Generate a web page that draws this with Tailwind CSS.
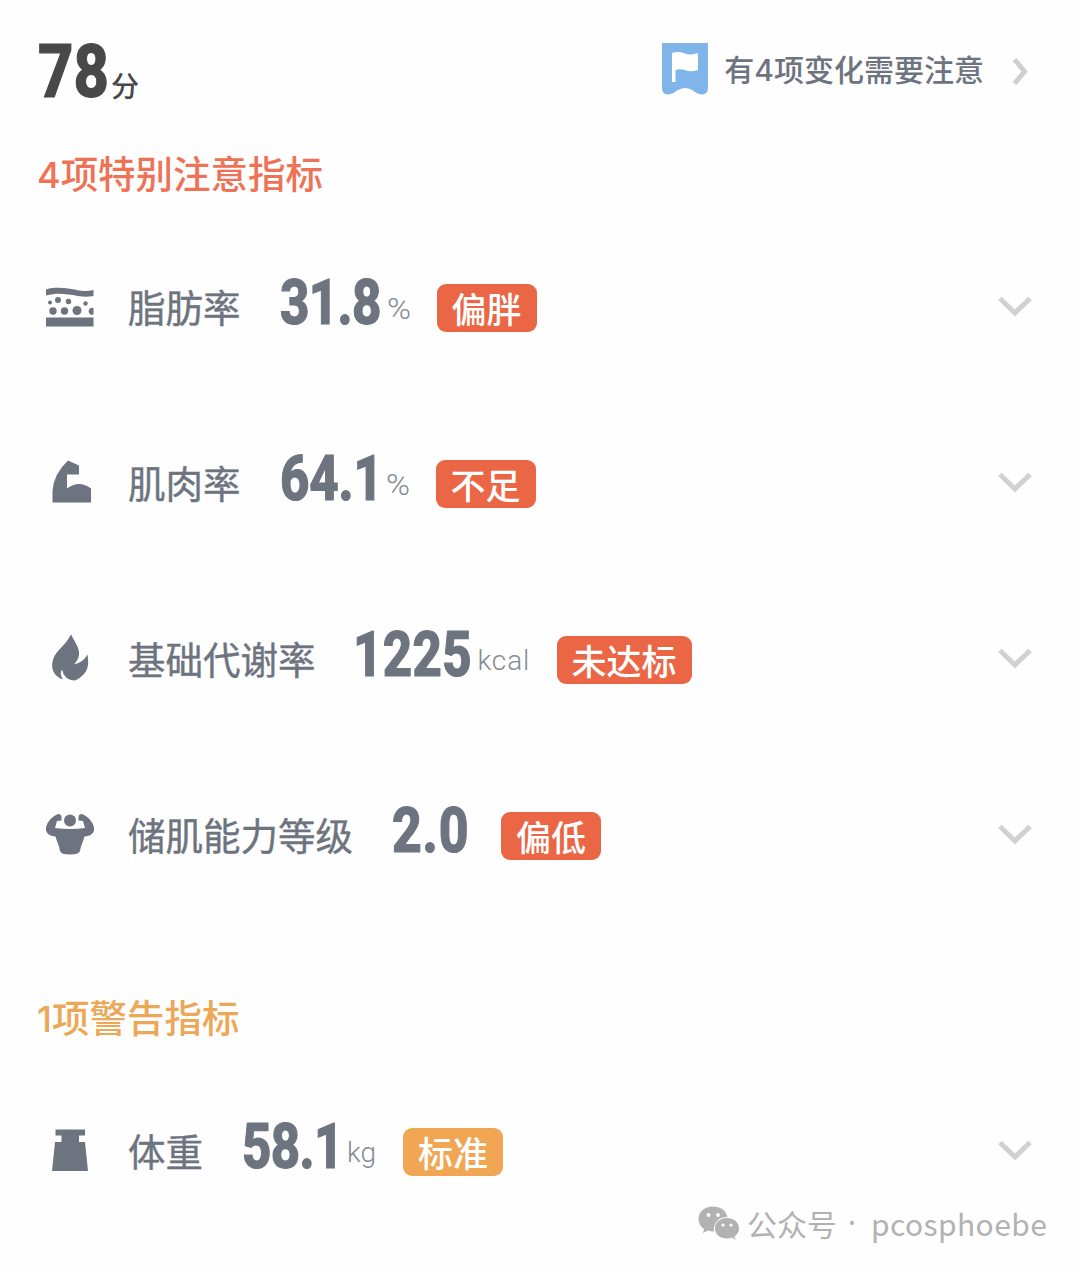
<!DOCTYPE html>
<html lang="zh-CN">
<head>
    <meta charset="UTF-8">
    <meta name="viewport" content="width=device-width, initial-scale=1.0">
    <title>身体指标</title>
    <script src="https://cdn.jsdelivr.net/npm/@tailwindcss/browser@4"></script>
</head>
<body class="bg-[#fefefe] h-[1268px] overflow-hidden text-[#6d747f] font-['Noto_Sans_CJK_SC',sans-serif]">
    <header class="flex items-start h-[139px] pl-[38px] pr-[51px] pt-[34px] border-t border-[#fafafa]">
        <div class="w-[73px] h-[74px] font-['Roboto',sans-serif] font-extrabold text-[74px] leading-[74px] text-[#484848] [-webkit-text-stroke:1.2px]"><span class="inline-block origin-left scale-x-[.83]">78</span></div>
        <span class="pt-[35px] text-[28px] leading-[30px] font-medium text-[#484848]">分</span>
        <a href="#" class="ml-auto flex items-start">
            <svg class="mt-[7px] w-[48px] h-[54px]" viewBox="0 0 48 54">
                <path fill="#7fb5e8" d="M1 1H47V46Q47 52 41 52.500Q37 52.500 31 48Q24 44 17 48Q11 52.500 7 52.500Q1 52 1 46Z"/>
                <path fill="#fff" d="M11 11Q17 9 24 11.500Q30 13.500 37 11V28Q30 30.500 24 28Q19 26.500 14.500 28V40H11Z"/>
            </svg>
            <span class="ml-[15px] pt-[15px] text-[30px] leading-[36px] font-medium whitespace-nowrap">有<span class="font-['Inter',sans-serif]">4</span>项变化需要注意</span>
            <svg class="ml-[28px] mt-[22px] w-[17px] h-[29px]" viewBox="0 0 17 29" fill="none" stroke="#cfcfcf" stroke-width="5"><path d="M2.500 2.500L12.500 14.500L2.500 26.500"/></svg>
        </a>
    </header>

    <h2 class="h-[80px] pl-[37px] pt-[12px] text-[37.5px] leading-[42px] font-medium text-[#ee7356]"><span class="font-['Inter',sans-serif] text-[36px]">4</span>项特别注意指标</h2>
    <ul>
        <!-- 脂肪率 -->
        <li class="flex items-center h-[176px] pl-[46px] pr-[48px]">
            <svg class="w-[48px] h-[48px]" viewBox="0 0 48 48" fill="currentColor">
                <path d="M0 6.500C12 3 25 6 33 7.500Q40 8.500 47.500 7V13Q40 14.500 32 13C20 11 12 9.500 0 12.500Z"/>
                <path d="M0 34.500H47.500V43.500H0Z"/>
                <circle cx="4" cy="19.500" r="2"/><circle cx="12" cy="17" r="3"/><circle cx="22.500" cy="18.500" r="2.700"/><circle cx="39.500" cy="20.500" r="2.200"/>
                <circle cx="7" cy="28" r="3.700"/><circle cx="18.500" cy="28" r="3.700"/><circle cx="31" cy="27.500" r="4.500"/><path d="M47.500 25V31.500A3.500 3.500 0 1 1 47.500 25Z"/>
            </svg>
            <span class="ml-[34px] mb-[3px] text-[37.5px] leading-[44px] whitespace-nowrap [-webkit-text-stroke:0.4px]">脂肪率</span>
            <div class="ml-[39px] w-[107px] h-[64px] mb-[9px] font-['Roboto',sans-serif] font-extrabold text-[63px] leading-[64px] tracking-[-0.8px] [-webkit-text-stroke:1.2px]"><span class="inline-block origin-left scale-x-[.81]">31.8</span></div>
            <span class="w-[50px] mt-[3px] font-['Roboto',sans-serif] font-light text-[29px] leading-[32px] text-[#858b94]"><span class="inline-block origin-left scale-x-[1.12]">%</span></span>
            <span class="mt-[2px] h-[48px] px-[15px] rounded-[9px] bg-[#ea6645] text-white text-[35px] leading-[48px] font-medium whitespace-nowrap">偏胖</span>
            <svg class="ml-auto w-[34px] h-[22px]" viewBox="0 0 34 22" fill="none" stroke="#d1d1d1" stroke-width="5"><path d="M2 2.500L17 17L32 2.500"/></svg>
        </li>
        <!-- 肌肉率 -->
        <li class="flex items-center h-[176px] pl-[46px] pr-[48px]">
            <svg class="w-[48px] h-[48px]" viewBox="0 0 48 48" fill="currentColor">
                <path d="M22 1.500L33 6.500V15.500H21V29.500Q33 20.500 45 29.500V43.500H6.500V32Q7.500 15 22 1.500Z"/>
            </svg>
            <span class="ml-[34px] mb-[3px] text-[37.5px] leading-[44px] whitespace-nowrap [-webkit-text-stroke:0.4px]">肌肉率</span>
            <div class="ml-[39px] w-[106px] h-[64px] mb-[9px] font-['Roboto',sans-serif] font-extrabold text-[63px] leading-[64px] tracking-[-0.2px] [-webkit-text-stroke:1.2px]"><span class="inline-block origin-left scale-x-[.81]">64.1</span></div>
            <span class="w-[50px] mt-[3px] font-['Roboto',sans-serif] font-light text-[29px] leading-[32px] text-[#858b94]"><span class="inline-block origin-left scale-x-[1.12]">%</span></span>
            <span class="mt-[2px] h-[48px] px-[15px] rounded-[9px] bg-[#ea6645] text-white text-[35px] leading-[48px] font-medium whitespace-nowrap">不足</span>
            <svg class="ml-auto w-[34px] h-[22px]" viewBox="0 0 34 22" fill="none" stroke="#d1d1d1" stroke-width="5"><path d="M2 2.500L17 17L32 2.500"/></svg>
        </li>
        <!-- 基础代谢率 -->
        <li class="flex items-center h-[176px] pl-[46px] pr-[48px]">
            <svg class="w-[48px] h-[48px]" viewBox="0 0 48 48" fill="currentColor">
                <path d="M25 -1C27 5 34 12 33 20Q32 26 27.500 29.500Q37 28 41.500 19.500C43 30 42 34 38 39Q33 44 29 45.500Q18 45 16 34.500Q13 39 17 44.500C8 41 5 34 6.500 27C8 16 20 11 25 -1Z"/>
            </svg>
            <span class="ml-[34px] mb-[3px] text-[37.5px] leading-[44px] whitespace-nowrap [-webkit-text-stroke:0.4px]">基础代谢率</span>
            <div class="ml-[37px] w-[125px] h-[64px] mb-[9px] font-['Roboto',sans-serif] font-extrabold text-[63px] leading-[64px] tracking-[0.4px] [-webkit-text-stroke:1.2px]"><span class="inline-block origin-left scale-x-[.81]">1225</span></div>
            <span class="w-[79px] mt-[3px] font-['Roboto',sans-serif] font-light text-[28px] leading-[32px] tracking-[0.9px] text-[#858b94]">kcal</span>
            <span class="mt-[2px] h-[48px] px-[15px] rounded-[9px] bg-[#ea6645] text-white text-[35px] leading-[48px] font-medium whitespace-nowrap">未达标</span>
            <svg class="ml-auto w-[34px] h-[22px]" viewBox="0 0 34 22" fill="none" stroke="#d1d1d1" stroke-width="5"><path d="M2 2.500L17 17L32 2.500"/></svg>
        </li>
        <!-- 储肌能力等级 -->
        <li class="flex items-center h-[176px] pl-[46px] pr-[48px]">
            <svg class="w-[48px] h-[48px]" viewBox="0 0 48 48" fill="currentColor">
                <circle cx="24" cy="9.500" r="6"/>
                <path d="M12 3Q15.500 3 15.500 6V9.500L11 10L9 17Q24 19 39 17L37 10L32.500 9.500V6Q32.500 3 36 3Q46 7 48.500 18Q47 25 38.500 25.500C37 31 34.500 35 34 40Q33 43.500 24 43.500Q15 43.500 14 40C13.500 35 11 31 9.500 25.500Q1 25 -.500 18Q2 7 12 3Z"/>
            </svg>
            <span class="ml-[34px] mb-[3px] text-[37.5px] leading-[44px] whitespace-nowrap [-webkit-text-stroke:0.4px]">储肌能力等级</span>
            <div class="ml-[39px] w-[109px] h-[64px] mb-[9px] font-['Roboto',sans-serif] font-extrabold text-[63px] leading-[64px] tracking-[1px] [-webkit-text-stroke:1.2px]"><span class="inline-block origin-left scale-x-[.82]">2.0</span></div>
            <span class="mt-[2px] h-[48px] px-[15px] rounded-[9px] bg-[#ea6645] text-white text-[35px] leading-[48px] font-medium whitespace-nowrap">偏低</span>
            <svg class="ml-auto w-[34px] h-[22px]" viewBox="0 0 34 22" fill="none" stroke="#d1d1d1" stroke-width="5"><path d="M2 2.500L17 17L32 2.500"/></svg>
        </li>
    </ul>

    <h2 class="h-[140px] pl-[37px] pt-[72px] text-[37.5px] leading-[42px] font-medium text-[#eda857]"><span class="font-['Inter',sans-serif] text-[36px]">1</span>项警告指标</h2>
    <ul>
        <!-- 体重 -->
        <li class="flex items-center h-[176px] pl-[46px] pr-[48px]">
            <svg class="w-[48px] h-[48px]" viewBox="0 0 48 48" fill="currentColor">
                <path d="M9.500 2.500H39V8.500H33V15H39L42 44H6L9 15H15.500V8.500H9.500Z"/>
            </svg>
            <span class="ml-[34px] mb-[3px] text-[37.5px] leading-[44px] whitespace-nowrap [-webkit-text-stroke:0.4px]">体重</span>
            <div class="ml-[39px] w-[105px] h-[64px] mb-[9px] font-['Roboto',sans-serif] font-extrabold text-[63px] leading-[64px] tracking-[-0.8px] [-webkit-text-stroke:1.2px]"><span class="inline-block origin-left scale-x-[.81]">58.1</span></div>
            <span class="w-[56px] mt-[4px] font-['Roboto',sans-serif] font-light text-[28px] leading-[32px] text-[#858b94]">kg</span>
            <span class="mt-[2px] h-[48px] px-[15px] rounded-[9px] bg-[#f0a652] text-white text-[35px] leading-[48px] font-medium whitespace-nowrap">标准</span>
            <svg class="ml-auto w-[34px] h-[22px]" viewBox="0 0 34 22" fill="none" stroke="#d1d1d1" stroke-width="5"><path d="M2 2.500L17 17L32 2.500"/></svg>
        </li>
    </ul>

    <!-- watermark over the last row -->
    <div class="absolute left-[698px] top-[1203px] flex items-center h-[40px] text-[#b2b2b2] whitespace-nowrap">
        <svg class="w-[42px] h-[36px]" viewBox="0 0 42 36" fill="currentColor">
            <path d="M15 1.500C6.500 1.500 .500 7 .500 14Q.500 20 6 24L5 28L10 25.500Q12.500 26.500 16 26.500A12.500 12.500 0 0 1 29.500 12Q27 1.500 15 1.500Z"/>
            <path d="M29 13C22 13 17 17.500 17 23.500S22 33.500 29 33.500Q32 33.500 34 32.500L37.500 35L36.500 31.500Q41 28 41 23.500C41 17.500 36 13 29 13Z"/>
            <g fill="#fefefe"><circle cx="10.500" cy="10" r="1.900"/><circle cx="20" cy="10" r="1.900"/><circle cx="25" cy="20" r="1.600"/><circle cx="33" cy="20" r="1.600"/></g>
        </svg>
        <span class="ml-[7px] w-[101px] text-[30px] leading-[40px]">公众号</span>
        <span class="w-[23px] font-['Noto_Sans',sans-serif] text-[30px] leading-[40px]">·</span>
        <span class="text-[30px] leading-[40px] tracking-[0.4px]">pcosphoebe</span>
    </div>
</body>
</html>
